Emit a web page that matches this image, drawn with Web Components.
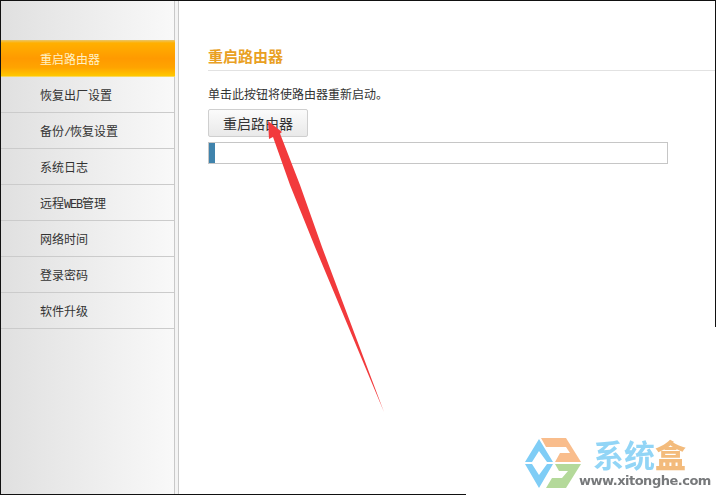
<!DOCTYPE html>
<html lang="zh">
<head>
<meta charset="utf-8">
<title>重启路由器</title>
<style>
  html, body { margin: 0; height: 100%; background: #fff; }
  body { font-family: "Noto Sans CJK SC", "Liberation Sans", sans-serif; overflow: hidden; }
</style>
</head>
<body>
<router-page>
  <side-nav slot="nav">
    <nav-item active>重启路由器</nav-item>
    <nav-item>恢复出厂设置</nav-item>
    <nav-item>备份<span>/</span>恢复设置</nav-item>
    <nav-item>系统日志</nav-item>
    <nav-item>远程<span>WEB</span>管理</nav-item>
    <nav-item>网络时间</nav-item>
    <nav-item>登录密码</nav-item>
    <nav-item>软件升级</nav-item>
  </side-nav>
  <reboot-panel heading="重启路由器" hint="单击此按钮将使路由器重新启动。" label="重启路由器"></reboot-panel>
  <red-arrow slot="over"></red-arrow>
  <site-mark slot="over"></site-mark>
</router-page>

<script>
// page frame: sidebar column + content column, black edge of the captured window
class RouterPage extends HTMLElement {
    constructor() {
        super();
        this.attachShadow({mode: 'open'}).innerHTML = `
          <style>
            :host { display: flex; position: relative; width: 716px; height: 495px; box-sizing: border-box;
                    border-top: 1px solid #111; border-left: 1px solid #111; overflow: hidden; background: #fff; }
            .gap { width: 3px; background: #f4f4f4; border-right: 1px solid #c9c9c9; flex: none; }
            .main { flex: 1; min-width: 0; }
            .edge-r { position: absolute; right: 0; top: 0; width: 1px; height: 326px; background: #111; }
            .edge-b { position: absolute; left: 0; bottom: 0; width: 465px; height: 1px; background: #111; }
          </style>
          <slot name="nav"></slot>
          <div class="gap"></div>
          <div class="main"><slot></slot></div>
          <slot name="over"></slot>
          <div class="edge-r"></div>
          <div class="edge-b"></div>`;
    }
}

class SideNav extends HTMLElement {
    constructor() {
        super();
        this.attachShadow({mode: 'open'}).innerHTML = `
          <style>
            :host { display: flex; flex-direction: column; flex: none; box-sizing: border-box; width: 174px;
                    padding-top: 39px; border-right: 1px solid #c9c9c9;
                    background: linear-gradient(to right, #e0e0e0, #f9f9f9); }
          </style>
          <slot></slot>`;
    }
}

class NavItem extends HTMLElement {
    constructor() {
        super();
        this.attachShadow({mode: 'open'}).innerHTML = `
          <style>
            :host { display: flex; align-items: center; box-sizing: border-box; height: 36px; padding-left: 39px;
                    border-bottom: 1px solid #cbcbcb; font-size: 12px; color: #333; white-space: nowrap; }
            :host([active]) { height: 37px; margin-right: -1px; color: #fff2c4; border-bottom: 0;
                    background: linear-gradient(to bottom, #e9c66c 0, #ffb000 3px, #ff9a00 50%, #ffa400 75%, #ffc800 97%, #f5e6a8 100%); }
            ::slotted(span) { font: 12px "Liberation Mono", monospace; letter-spacing: -1.2px; }
          </style>
          <div><slot></slot></div>`;
    }
}

class RebootPanel extends HTMLElement {
    constructor() {
        super();
        this.attachShadow({mode: 'open'}).innerHTML = `
          <style>
            :host { display: block; padding: 44px 0 0 29px; }
            h2 { margin: 0; height: 25px; line-height: 21px; font-size: 15px; font-weight: 700; color: #e9a023;
                 border-bottom: 1px solid #e2e2e2; }
            p { margin: 15px 0 0; height: 16px; line-height: 16px; font-size: 12px; color: #333; }
            button { display: block; box-sizing: border-box; width: 100px; height: 28px; margin: 7px 0 0; padding: 0;
                     border: 1px solid #cfcfcf; border-radius: 2px; font: 14px "Noto Sans CJK SC", sans-serif; color: #333;
                     background: linear-gradient(to bottom, #fbfbfb, #e9e9e9); }
            .bar { box-sizing: border-box; width: 460px; height: 22px; margin-top: 5px; border: 1px solid #c6c6c6; background: #fff; }
            .bar i { display: block; width: 6px; height: 100%; background: #3f83ac; }
          </style>
          <h2></h2>
          <p></p>
          <button type="button"></button>
          <div class="bar"><i></i></div>`;
        this.shadowRoot.querySelector('h2').textContent = this.getAttribute('heading');
        this.shadowRoot.querySelector('p').textContent = this.getAttribute('hint');
        this.shadowRoot.querySelector('button').textContent = this.getAttribute('label');
    }
}

// hand drawn annotation over the screenshot
class RedArrow extends HTMLElement {
    constructor() {
        super();
        this.attachShadow({mode: 'open'}).innerHTML = `
          <style>
            :host { position: absolute; left: -1px; top: -1px; width: 716px; height: 495px; pointer-events: none; }
            svg { display: block; }
          </style>
          <svg width="716" height="495" viewBox="0 0 716 495">
            <polygon fill="#f23a3c" points="268,121 282,132 280,133.5 300,185 322,247 384,412 315,247 290,185 273,137 269,139"/>
          </svg>`;
    }
}

class SiteMark extends HTMLElement {
    constructor() {
        super();
        this.attachShadow({mode: 'open'}).innerHTML = `
          <style>
            :host { position: absolute; left: 523px; top: 436px; display: flex; gap: 14px; width: 186px; height: 56px; }
            svg { flex: none; filter: blur(.4px); }
            .txt { display: flex; flex-direction: column; }
            .cn { font: 700 31px/34px "Noto Sans CJK SC", sans-serif; color: #92d5f6; margin-left: -3px; white-space: nowrap; height: 36px; filter: blur(.5px); }
            .cn b { color: #f3bb7c; }
            .url { font: 700 13px/16px "DejaVu Sans", sans-serif; color: #77797b; margin-left: -17px; letter-spacing: -.5px; white-space: nowrap; filter: blur(.3px); }
          </style>
          <svg width="58" height="52" viewBox="523 436 58 52">
            <path fill="#7fcdf6" d="M524 461 538 438 552 461H546L538 450 531 461Z"/>
            <path fill="#7fcdf6" d="M524 463 538 487 552 463H546L538 474 531 463Z"/>
            <path fill="#f9bd8c" d="M540 437H565L580 461H554L559 452H569L565 446H545Z"/>
            <path fill="#b4d99a" d="M554 463H580L565 487H545L551 477H561L567 470H558Z"/>
          </svg>
          <div class="txt">
            <div class="cn">系统<b>盒</b></div>
            <div class="url">www.xitonghe.com</div>
          </div>`;
    }
}

customElements.define('router-page', RouterPage);
customElements.define('side-nav', SideNav);
customElements.define('nav-item', NavItem);
customElements.define('reboot-panel', RebootPanel);
customElements.define('red-arrow', RedArrow);
customElements.define('site-mark', SiteMark);
</script>
</body>
</html>
